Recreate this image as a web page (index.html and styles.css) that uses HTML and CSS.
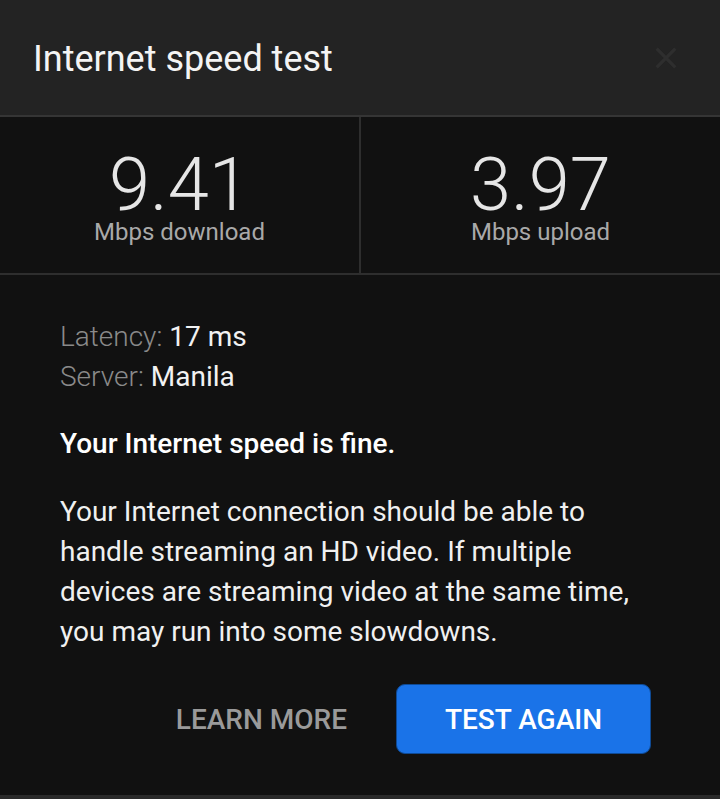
FILE: index.html
```html
<!DOCTYPE html>
<html lang="en">

<head>
    <meta charset="UTF-8">
    <meta name="viewport" content="width=device-width, initial-scale=1.0">
    <title>Internet speed test</title>
    <link rel="stylesheet" href="styles.css">
</head>

<body>
    <div class="dialog">
        <header class="dialog-head">
            <h1>Internet speed test</h1>
            <span class="close">
                <svg width="32" height="32" viewBox="0 0 24 24"><path d="M5 5L19 19M19 5L5 19" stroke="#2e2e2e" stroke-width="2.4" fill="none"/></svg>
            </span>
        </header>

        <div class="stats">
            <div class="stat">
                <div class="stat-num">9.41</div>
                <div class="stat-label">Mbps download</div>
            </div>
            <div class="stat">
                <div class="stat-num">3.97</div>
                <div class="stat-label">Mbps upload</div>
            </div>
        </div>

        <main class="content">
            <p class="meta"><span class="key">Latency:</span> 17 ms</p>
            <p class="meta"><span class="key">Server:</span> Manila</p>
            <p class="verdict">Your Internet speed is fine.</p>
            <p class="desc">Your Internet connection should be able to handle streaming an HD video. If multiple devices are streaming video at the same time, you may run into some slowdowns.</p>

            <div class="actions">
                <button class="btn-text">LEARN MORE</button>
                <button class="btn-main">TEST AGAIN</button>
            </div>
        </main>
    </div>
</body>

</html>
```

FILE: styles.css
```css
* {
    margin: 0;
    padding: 0;
    box-sizing: border-box;
}

html,
body {
    width: 100%;
    height: 100%;
    background: #111111;
    font-family: Roboto, "Liberation Sans", sans-serif;
    color: #ffffff;
}

.dialog {
    height: 100%;
    display: flex;
    flex-direction: column;
    border-bottom: solid 4px #2a2a2a;
}

.dialog-head {
    height: 117px;
    background: #232323;
    border-bottom: solid 2px #353535;
    display: flex;
    align-items: center;
    justify-content: space-between;
    padding: 0 38px 0 33px;
}

.dialog-head h1 {
    font-size: 36px;
    font-weight: 400;
    color: #f4f4f4;
    margin-top: 2px;
}

.close {
    display: flex;
}

.stats {
    display: flex;
    height: 158px;
    border-bottom: solid 2px #2e2e2e;
}

.stat {
    flex: 1;
    display: flex;
    flex-direction: column;
    align-items: center;
    padding-top: 35px;
}

.stat + .stat {
    border-left: solid 2px #2e2e2e;
}

.stat-num {
    font-size: 74px;
    font-weight: 300;
    line-height: 66px;
    color: #e6e6e6;
}

.stat-label {
    font-size: 24px;
    font-weight: 400;
    color: #a9a9a9;
    line-height: 28px;
}

.content {
    flex: 1;
    padding: 42px 60px 0 60px;
    font-size: 28px;
    line-height: 40px;
}

.meta {
    color: #f2f2f2;
}

.meta .key {
    color: #8a8a8a;
    font-weight: 300;
}

.verdict {
    font-weight: 500;
    margin-top: 27px;
}

.desc {
    margin-top: 28px;
    color: #f0f0f0;
}

.actions {
    display: flex;
    justify-content: flex-end;
    align-items: center;
    gap: 49px;
    margin-top: 32px;
    margin-right: 9px;
}

.actions button {
    font-family: Roboto, "Liberation Sans", sans-serif;
    font-size: 28px;
    font-weight: 500;
    border: none;
    cursor: pointer;
}

.btn-text {
    background: none;
    color: #9a9a9a;
}

.btn-main {
    width: 255px;
    height: 70px;
    background: #1a73e8;
    color: #ffffff;
    border-radius: 9px;
    border: solid 1px #0f4a94 !important;
}
```
